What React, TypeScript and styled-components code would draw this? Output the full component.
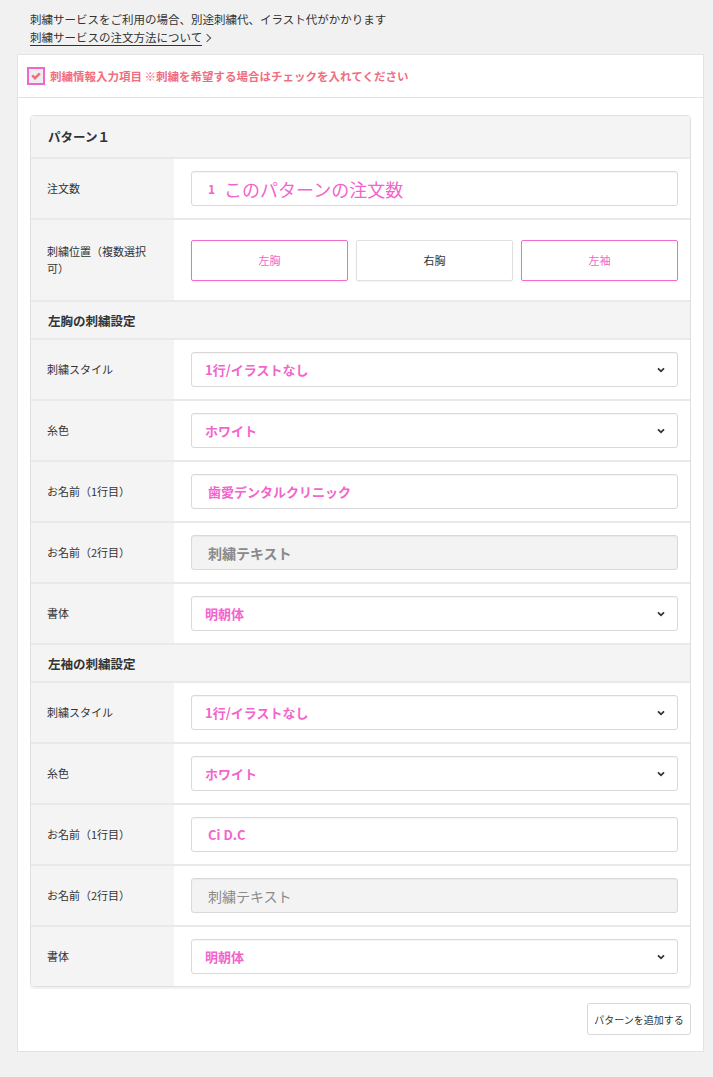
import React from "react";
import styled, { createGlobalStyle } from "styled-components";

const GlobalStyle = createGlobalStyle`
  body {
    margin: 0;
    background: #f1f1f1;
    font-family: "Noto Sans CJK JP", "Noto Sans", sans-serif;
    color: #333;
  }
`;

const PINK = "#f364cc";

const Page = styled.div`
  padding: 9px 9px 26px 17px;
`;

const Notice = styled.div`
  padding-left: 13px;
  font-size: 11.5px;
  line-height: 20px;
  color: #333;
`;

const LinkLine = styled.div`
  display: flex;
  align-items: center;
  gap: 2px;
`;

const GuideLink = styled.a`
  color: #333;
  text-decoration: none;
  border-bottom: 1px solid #333;
  line-height: 16px;
`;

const Chevron = styled.span`
  display: inline-block;
  width: 5px;
  height: 5px;
  border-right: 1.5px solid #555;
  border-top: 1.5px solid #555;
  transform: rotate(45deg);
`;

const Panel = styled.div`
  margin-top: 8px;
  background: #fff;
  border: 1px solid #e3e3e3;
`;

const CheckRow = styled.label`
  display: flex;
  align-items: center;
  gap: 5px;
  height: 42px;
  padding-left: 9px;
  border-bottom: 1px solid #e3e3e3;
  color: #ef6f80;
  font-size: 11.5px;
  font-weight: 700;
`;

const CheckBox = styled.span`
  display: flex;
  align-items: center;
  justify-content: center;
  width: 14px;
  height: 14px;
  border: 2px solid ${PINK};
  background: #eee;
`;

const PanelBody = styled.div`
  padding: 17px 12px 16px 12px;
`;

const Card = styled.div`
  border: 1px solid #e0e0e0;
  border-radius: 4px;
  overflow: hidden;
  box-shadow: 0 2px 1px rgba(0, 0, 0, 0.06);
`;

const SectionHead = styled.div<{ $tall?: boolean }>`
  height: ${(p) => (p.$tall ? 41 : 36)}px;
  display: flex;
  align-items: center;
  padding-left: 17px;
  background: #f4f4f4;
  font-size: 12.5px;
  font-weight: 700;
  color: #333;
  border-top: ${(p) => (p.$tall ? "none" : "2px solid #e9e9e9")};
`;

const Row = styled.div<{ $height?: number }>`
  display: grid;
  grid-template-columns: 143px 1fr;
  min-height: ${(p) => p.$height ?? 59}px;
  border-top: 2px solid #e9e9e9;
`;

const Label = styled.div`
  background: #f4f4f4;
  display: flex;
  align-items: center;
  padding: 0 16px;
  font-size: 11px;
  line-height: 17px;
  color: #333;
`;

const Cell = styled.div`
  display: flex;
  align-items: center;
  padding: 0 12px 0 17px;
`;

const Field = styled.div<{ $disabled?: boolean; $pad?: number }>`
  flex: 1;
  height: 33px;
  display: flex;
  align-items: center;
  gap: 9px;
  padding: 0 12px 0 ${(p) => p.$pad ?? 16}px;
  border: 1px solid #d9d9d9;
  border-radius: 3px;
  background: ${(p) => (p.$disabled ? "#f3f3f3" : "#fff")};
  box-shadow: inset 0 1px 1px rgba(0, 0, 0, 0.04);
`;

const FieldText = styled.span<{ $muted?: boolean; $bold?: boolean; $size?: number }>`
  flex: 1;
  font-size: ${(p) => p.$size ?? 13}px;
  font-weight: ${(p) => (p.$bold ? 700 : 400)};
  color: ${(p) => (p.$muted ? "#8a8a8a" : PINK)};
`;

const Small = styled.span`
  font-size: 12px;
  font-weight: 700;
  color: ${PINK};
`;

const Choices = styled.div`
  flex: 1;
  display: grid;
  grid-template-columns: repeat(3, 1fr);
  gap: 8px;
`;

const Choice = styled.div<{ $on?: boolean }>`
  height: 39px;
  display: flex;
  align-items: center;
  justify-content: center;
  font-size: 11px;
  background: #fff;
  color: ${(p) => (p.$on ? PINK : "#333")};
  border: 1px solid ${(p) => (p.$on ? "#f06cd0" : "#e0e0e0")};
  border-radius: 2px;
  box-shadow: 0 1px 2px rgba(0, 0, 0, 0.05);
  cursor: pointer;
`;

const AddRow = styled.div`
  display: flex;
  justify-content: flex-end;
  margin-top: 16px;
`;

const AddButton = styled.button`
  width: 104px;
  height: 32px;
  font-family: inherit;
  font-size: 10px;
  color: #333;
  background: #fff;
  border: 1px solid #d8d8d8;
  border-radius: 3px;
`;

const Caret = () => (
  <svg width="8" height="6" viewBox="0 0 8 6">
    <path d="M1 1.3 L4 4.3 L7 1.3" fill="none" stroke="#333" strokeWidth="1.8" />
  </svg>
);

const SelectField = ({ value }: { value: string }) => (
  <Field $pad={13}>
    <FieldText $bold>{value}</FieldText>
    <Caret />
  </Field>
);

interface Setting {
  title: string;
  style: string;
  color: string;
  name1: string;
  font: string;
  boldPlaceholder: boolean;
}

const settings: Setting[] = [
  { title: "左胸の刺繍設定", style: "1行/イラストなし", color: "ホワイト", name1: "歯愛デンタルクリニック", font: "明朝体", boldPlaceholder: true },
  { title: "左袖の刺繍設定", style: "1行/イラストなし", color: "ホワイト", name1: "Ci D.C", font: "明朝体", boldPlaceholder: false },
];

const SettingBlock = ({ s }: { s: Setting }) => (
  <>
    <SectionHead>{s.title}</SectionHead>
    <Row>
      <Label>刺繍スタイル</Label>
      <Cell><SelectField value={s.style} /></Cell>
    </Row>
    <Row>
      <Label>糸色</Label>
      <Cell><SelectField value={s.color} /></Cell>
    </Row>
    <Row>
      <Label>お名前（1行目）</Label>
      <Cell>
        <Field $pad={16}>
          <FieldText $bold>{s.name1}</FieldText>
        </Field>
      </Cell>
    </Row>
    <Row>
      <Label>お名前（2行目）</Label>
      <Cell>
        <Field $disabled $pad={16}>
          <FieldText $muted $bold={s.boldPlaceholder} $size={14}>刺繍テキスト</FieldText>
        </Field>
      </Cell>
    </Row>
    <Row>
      <Label>書体</Label>
      <Cell><SelectField value={s.font} /></Cell>
    </Row>
  </>
);

export default function App() {
  return (
    <Page>
      <GlobalStyle />
      <Notice>
        <div>刺繍サービスをご利用の場合、別途刺繍代、イラスト代がかかります</div>
        <LinkLine>
          <GuideLink href="#">刺繍サービスの注文方法について</GuideLink>
          <Chevron />
        </LinkLine>
      </Notice>
      <Panel>
        <CheckRow>
          <CheckBox>
            <svg width="10" height="8" viewBox="0 0 10 8">
              <path d="M1.2 3.4 L4 6.2 L8.8 1.4" fill="none" stroke="#ef6f80" strokeWidth="2.6" />
            </svg>
          </CheckBox>
          刺繍情報入力項目 ※刺繍を希望する場合はチェックを入れてください
        </CheckRow>
        <PanelBody>
          <Card>
            <SectionHead $tall>パターン１</SectionHead>
            <Row>
              <Label>注文数</Label>
              <Cell>
                <Field $pad={16}>
                  <Small>1</Small>
                  <FieldText $size={18}>このパターンの注文数</FieldText>
                </Field>
              </Cell>
            </Row>
            <Row $height={80}>
              <Label>刺繍位置（複数選択可）</Label>
              <Cell>
                <Choices>
                  <Choice $on>左胸</Choice>
                  <Choice>右胸</Choice>
                  <Choice $on>左袖</Choice>
                </Choices>
              </Cell>
            </Row>
            {settings.map((s) => (
              <SettingBlock key={s.title} s={s} />
            ))}
          </Card>
          <AddRow>
            <AddButton>パターンを追加する</AddButton>
          </AddRow>
        </PanelBody>
      </Panel>
    </Page>
  );
}
